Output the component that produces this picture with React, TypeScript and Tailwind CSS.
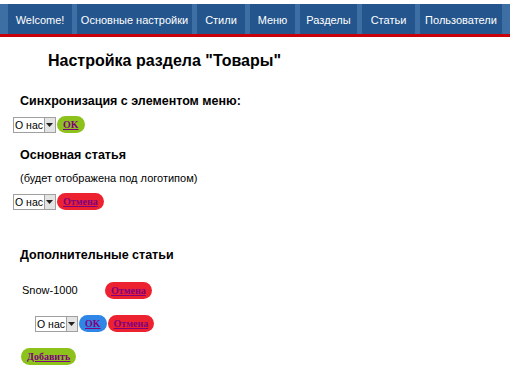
import React from "react";

const navItems: { label: string; w: string }[] = [
  { label: "Welcome!", w: "w-[64px]" },
  { label: "Основные настройки", w: "w-[115px]" },
  { label: "Стили", w: "w-[48px]" },
  { label: "Меню", w: "w-[45px]" },
  { label: "Разделы", w: "w-[57px]" },
  { label: "Статьи", w: "w-[53px]" },
  { label: "Пользователи", w: "w-[82px]" },
];

const font = "font-['Liberation_Sans',Tahoma,sans-serif]";

function Pill({ color, children }: { color: "green" | "red" | "blue"; children: React.ReactNode }) {
  const bg =
    color === "green" ? "bg-[#8dc21c]" : color === "red" ? "bg-[#ec2230]" : "bg-[#2f86e6]";
  return (
    <span className={`${bg} inline-flex h-[17px] items-center rounded-full px-[6px]`}>
      <a
        href="#"
        className="font-['Liberation_Serif',serif] text-[10px] font-bold leading-none text-[#800080] underline"
      >
        {children}
      </a>
    </span>
  );
}

function FakeSelect() {
  return (
    <span className="inline-flex h-[16px] items-stretch border border-[#a0a0a0] bg-white">
      <span className="px-[1px] text-[10.5px] leading-[14px] text-black">О нас</span>
      <span className="flex w-[11px] items-center justify-center border-l border-[#a0a0a0] bg-[#e4e4e4]">
        <svg width="7" height="4" viewBox="0 0 7 4">
          <path d="M0 0h7L3.5 4z" fill="#222" />
        </svg>
      </span>
    </span>
  );
}

export default function App() {
  return (
    <div className={`${font} h-[371px] w-[510px] overflow-hidden bg-white pt-[4px] text-black`}>
      <nav className="flex h-[33px] gap-[5px] border-b-[3px] border-[#c8000a] bg-[#3d6ea4] pl-[8px]">
        {navItems.map((n) => (
          <div
            key={n.label}
            className={`${n.w} flex shrink-0 items-center justify-center whitespace-nowrap bg-[#24558c] pt-[2px] text-[11px] text-white`}
          >
            {n.label}
          </div>
        ))}
      </nav>

      <h1 className="ml-[48px] mt-[14px] text-[16px] font-bold leading-[20px]">
        Настройка раздела "Товары"
      </h1>

      <h3 className="ml-[20px] mt-[22px] text-[12.5px] font-bold leading-[16px]">
        Синхронизация с элементом меню:
      </h3>
      <div className="ml-[13px] mt-[7px] flex items-center gap-[1px]">
        <FakeSelect />
        <Pill color="green">OK</Pill>
      </div>

      <h3 className="ml-[20px] mt-[14px] text-[12.5px] font-bold leading-[16px]">Основная статья</h3>
      <p className="ml-[20px] mt-[8px] text-[11px] leading-[14px]">(будет отображена под логотипом)</p>
      <div className="ml-[13px] mt-[8px] flex items-center gap-[1px]">
        <FakeSelect />
        <Pill color="red">Отмена</Pill>
      </div>

      <h3 className="ml-[20px] mt-[37px] text-[12.5px] font-bold leading-[16px]">Дополнительные статьи</h3>

      <div className="mt-[19px] flex items-center">
        <span className="ml-[22px] w-[83px] text-[11px]">Snow-1000</span>
        <Pill color="red">Отмена</Pill>
      </div>

      <div className="ml-[35px] mt-[16px] flex items-center gap-[1px]">
        <FakeSelect />
        <Pill color="blue">OK</Pill>
        <Pill color="red">Отмена</Pill>
      </div>

      <div className="ml-[21px] mt-[16px] flex">
        <Pill color="green">Добавить</Pill>
      </div>
    </div>
  );
}
